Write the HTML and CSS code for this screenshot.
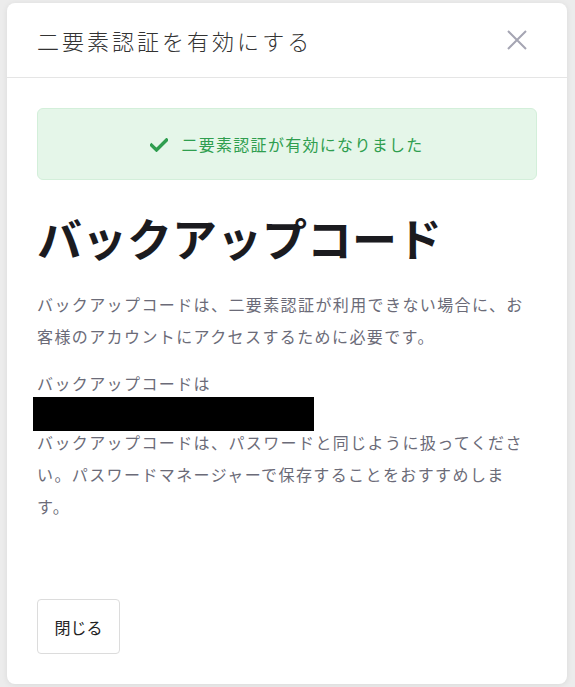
FILE: index.html
```html
<!DOCTYPE html>
<html lang="ja">
<head>
<meta charset="utf-8">
<link rel="stylesheet" href="styles.css">
</head>
<body>
<div class="backdrop">
  <div class="modal">
    <div class="modal-header">
      <h2 class="modal-title">二要素認証を有効にする</h2>
      <button class="close" aria-label="閉じる">
        <svg width="20" height="20" viewBox="0 0 20 20"><path d="M1 1L19 19M19 1L1 19" stroke="#a5a5b3" stroke-width="2" fill="none"/></svg>
      </button>
    </div>
    <div class="modal-body">
      <div class="alert">
        <svg class="check" width="18" height="14" viewBox="0 0 18 14"><path d="M1.5 7.2L6.5 12L16.5 2" stroke="#2f9e4f" stroke-width="3.4" fill="none" stroke-linecap="square"/></svg>
        <span>二要素認証が有効になりました</span>
      </div>
      <h1 class="heading">バックアップコード</h1>
      <p class="text">バックアップコードは、二要素認証が利用できない場合に、お客様のアカウントにアクセスするために必要です。</p>
      <p class="text code-label">バックアップコードは</p>
      <div class="redacted"></div>
      <p class="text after">バックアップコードは、パスワードと同じように扱ってください。パスワードマネージャーで保存することをおすすめします。</p>
      <div class="footer">
        <button class="btn">閉じる</button>
      </div>
    </div>
  </div>
</div>
</body>
</html>
```
FILE: styles.css
```css
* { box-sizing: border-box; }
html, body { margin: 0; padding: 0; }
body {
  font-family: "Noto Sans CJK JP", "Noto Sans", sans-serif;
  background: #ececec;
  width: 575px;
  height: 687px;
  overflow: hidden;
}
.backdrop {
  padding: 3px 8px 3px 7px;
  height: 687px;
}
.modal {
  background: #fff;
  border-radius: 8px;
  box-shadow: 0 1px 6px rgba(0,0,0,0.08);
  height: 681px;
  display: flex;
  flex-direction: column;
}
.modal-header {
  height: 75px;
  border-bottom: 1px solid #e5e5e5;
  display: flex;
  align-items: center;
  justify-content: space-between;
  padding: 0 40px 0 30px;
}
.modal-title {
  margin: 0;
  font-size: 22px;
  font-weight: 300;
  color: #333;
  letter-spacing: 3px;
}
.close {
  background: none;
  border: 0;
  padding: 0;
  width: 20px;
  height: 20px;
  display: flex;
}
.modal-body {
  padding: 30px 30px 0 30px;
  display: flex;
  flex-direction: column;
  flex: 1;
}
.alert {
  height: 72px;
  background: #e5f6e9;
  border: 1px solid #d3efda;
  border-radius: 6px;
  display: flex;
  align-items: center;
  justify-content: center;
  gap: 13px;
  color: #2f9e4f;
  font-size: 16px;
  letter-spacing: 1.3px;
}
.check { margin-top: 1px; }
.heading {
  margin: 26px 0 0 0;
  font-size: 45px;
  font-weight: 700;
  color: #1b1b1f;
  line-height: 64px;
}
.text {
  margin: 18px 0 0 0;
  font-size: 16px;
  line-height: 32px;
  color: #6b6b78;
  letter-spacing: 1.4px;
}
.code-label { margin-top: 15px; }
.redacted {
  width: 281px;
  height: 34px;
  background: #000;
  margin: -2px 0 -5px -4px;
  position: relative;
  z-index: 1;
}
.text.after { margin-top: 0; }
.footer {
  margin-top: auto;
  padding-bottom: 30px;
}
.btn {
  width: 83px;
  height: 55px;
  background: #fff;
  border: 1px solid #dcdcdc;
  border-radius: 4px;
  font-family: inherit;
  font-size: 16px;
  color: #222;
}
```
